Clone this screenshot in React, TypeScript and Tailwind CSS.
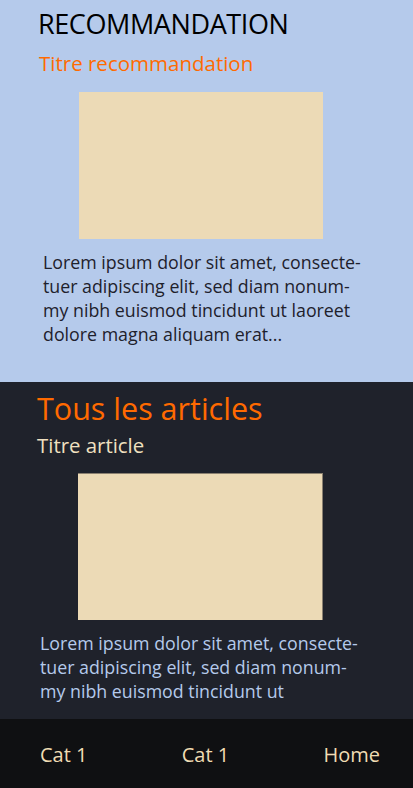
import React from "react";

const font = { fontFamily: '"Open Sans", "Liberation Sans", sans-serif' };

export default function App() {
  return (
    <div className="w-[413px] h-[788px] flex flex-col overflow-hidden" style={font}>
      <section className="h-[382px] bg-[#b5caeb] flex flex-col pl-[38px] pt-[6px]">
        <h1 className="text-[27px] leading-[36px] text-black tracking-[-0.4px]">RECOMMANDATION</h1>
        <h2 className="mt-[8px] text-[20.5px] leading-[27px] text-[#ff6a00] ml-[1px]">Titre recommandation</h2>
        <div className="mt-[15px] ml-[41px] w-[244px] h-[147px] bg-[#ecdab6]" />
        <p className="mt-[11px] ml-[5px] text-[17.8px] leading-[24px] text-[#1e212c] whitespace-nowrap">
          Lorem ipsum dolor sit amet, consecte-<br />
          tuer adipiscing elit, sed diam nonum-<br />
          my nibh euismod tincidunt ut laoreet<br />
          dolore magna aliquam erat...
        </p>
      </section>
      <section className="h-[337px] bg-[#1f222b] flex flex-col pl-[37px] pt-[6px]">
        <h2 className="text-[30.5px] leading-[40px] text-[#ff6a00]">Tous les articles</h2>
        <h3 className="mt-[4px] text-[20.4px] leading-[26px] text-[#f0e0c0]">Titre article</h3>
        <div className="mt-[15px] ml-[41px] w-[245px] h-[147px] bg-[#ecdab6] border-t border-r border-[#8a8070]" />
        <p className="mt-[11px] ml-[3px] text-[17.8px] leading-[24px] text-[#b5caeb] whitespace-nowrap">
          Lorem ipsum dolor sit amet, consecte-<br />
          tuer adipiscing elit, sed diam nonum-<br />
          my nibh euismod tincidunt ut
        </p>
      </section>
      <nav className="flex-1 bg-[#0f1012] flex items-center justify-between pl-[40px] pr-[33px] pt-[2px] text-[20px] text-[#f0dcb4]">
        <span>Cat 1</span>
        <span>Cat 1</span>
        <span>Home</span>
      </nav>
    </div>
  );
}
